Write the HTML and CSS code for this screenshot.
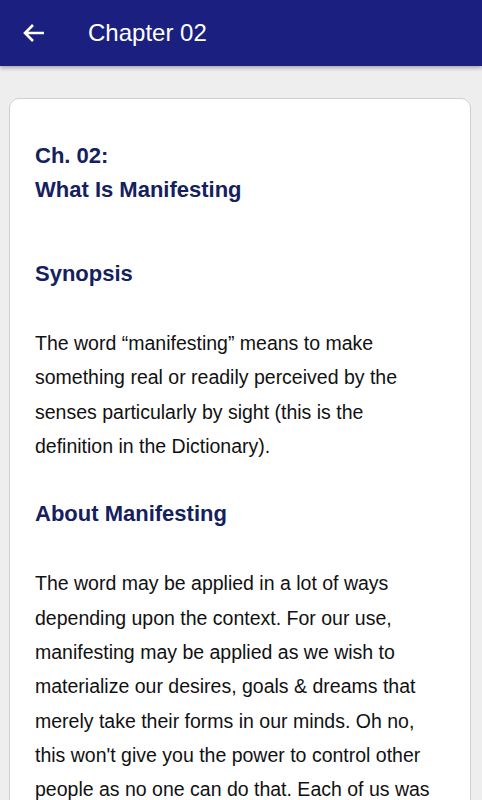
FILE: index.html
```html
<!DOCTYPE html>
<html lang="en">
<head>
<meta charset="utf-8">
<title>Chapter 02</title>
<link rel="stylesheet" href="styles.css">
</head>
<body>
<header class="appbar">
  <svg class="back" width="24" height="20" viewBox="0 0 24 20" aria-hidden="true">
    <path d="M3 10H22M11 2L3 10L11 18" fill="none" stroke="#fff" stroke-width="2.6" stroke-linecap="butt" stroke-linejoin="miter"/>
  </svg>
  <h1 class="title">Chapter 02</h1>
</header>
<main class="card">
  <h2 class="chapter">Ch. 02:<br>What Is Manifesting</h2>
  <h3 class="section">Synopsis</h3>
  <p class="text">The word “manifesting” means to make something real or readily perceived by the senses particularly by sight (this is the definition in the Dictionary).</p>
  <h3 class="section">About Manifesting</h3>
  <p class="text">The word may be applied in a lot of ways depending upon the context. For our use, manifesting may be applied as we wish to materialize our desires, goals &amp; dreams that merely take their forms in our minds. Oh no, this won't give you the power to control other people as no one can do that. Each of us was given the free will to do what we want.</p>
</main>
</body>
</html>
```
FILE: styles.css
```css
html, body {
  margin: 0;
  padding: 0;
}
body {
  background: #eeeeee;
  font-family: "Liberation Sans", Arial, sans-serif;
  overflow: hidden;
  height: 800px;
}
.appbar {
  height: 66px;
  background: #1a1f80;
  display: flex;
  align-items: center;
  box-shadow: 0 2px 4px rgba(0,0,0,0.3);
  position: relative;
}
.back {
  margin-left: 22px;
  flex: none;
}
.title {
  margin: 0 0 0 42px;
  color: #fff;
  font-size: 24px;
  font-weight: normal;
  line-height: 1;
}
.card {
  margin: 32px 11px 0 9px;
  background: #fff;
  border: 1px solid #cfcfcf;
  border-radius: 10px;
  padding: 40px 25px 0 25px;
}
.chapter {
  margin: 0 0 50px 0;
  font-size: 22px;
  line-height: 34px;
  font-weight: bold;
  color: #14215e;
}
.section {
  margin: 0 0 35px 0;
  font-size: 22px;
  line-height: 34px;
  font-weight: bold;
  color: #14215e;
}
.text {
  margin: 0 0 34px 0;
  font-size: 19.5px;
  line-height: 34.33px;
  color: #111111;
}
```
